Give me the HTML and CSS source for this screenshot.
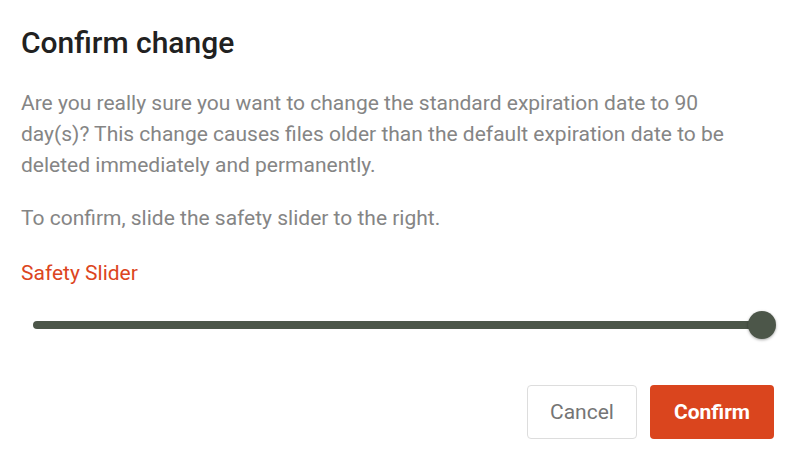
FILE: index.html
```html
<!DOCTYPE html>
<html lang="en">
<head>
    <meta charset="UTF-8">
    <title>Confirm change</title>
    <link rel="stylesheet" href="styles.css">
</head>
<body>
<div class="dialog">
    <h1 class="title">Confirm change</h1>
    <p class="text">Are you really sure you want to change the standard expiration date to 90 day(s)? This change causes files older than the default expiration date to be deleted immediately and permanently.</p>
    <p class="text">To confirm, slide the safety slider to the right.</p>

    <div class="field">
        <label class="fieldLabel">Safety Slider</label>
        <div class="slider">
            <div class="track"></div>
            <div class="thumb"></div>
        </div>
    </div>

    <div class="actions">
        <button class="btn btnCancel">Cancel</button>
        <button class="btn btnConfirm">Confirm</button>
    </div>
</div>
</body>
</html>
```

FILE: styles.css
```css
body {
    margin: 0;
    background: #ffffff;
    font-family: Roboto, "Liberation Sans", sans-serif;
}

.dialog {
    width: 800px;
    height: 454px;
    box-sizing: border-box;
    padding: 22px 26px 0 21px;
}

.title {
    margin: 0 0 24px 0;
    font-size: 30px;
    font-weight: 500;
    line-height: 42px;
    color: #212121;
}

.text {
    max-width: 730px;
    margin: 0 0 22px 0;
    font-size: 21px;
    line-height: 31px;
    color: #858585;
}

.field {
    margin-top: 27px;
}

.fieldLabel {
    display: block;
    font-size: 21px;
    line-height: 24px;
    color: #dc4521;
}

.slider {
    position: relative;
    height: 32px;
    margin: 24px 0 0 12px;
    display: flex;
    align-items: center;
}

.track {
    flex: 1;
    height: 8px;
    border-radius: 4px;
    background: #4c5649;
}

.thumb {
    position: absolute;
    right: -2px;
    top: 2px;
    width: 28px;
    height: 28px;
    border-radius: 50%;
    background: #4c5649;
    box-shadow: 0 1px 3px rgba(0, 0, 0, 0.35);
}

.actions {
    display: flex;
    justify-content: flex-end;
    gap: 13px;
    margin-top: 44px;
}

.btn {
    height: 54px;
    border-radius: 4px;
    font-family: Roboto, "Liberation Sans", sans-serif;
    font-size: 21px;
    cursor: pointer;
}

.btnCancel {
    width: 110px;
    background: #ffffff;
    border: 1px solid #dddddd;
    color: #757575;
}

.btnConfirm {
    width: 124px;
    background: #da451e;
    border: none;
    color: #ffffff;
    font-weight: 700;
}
```
